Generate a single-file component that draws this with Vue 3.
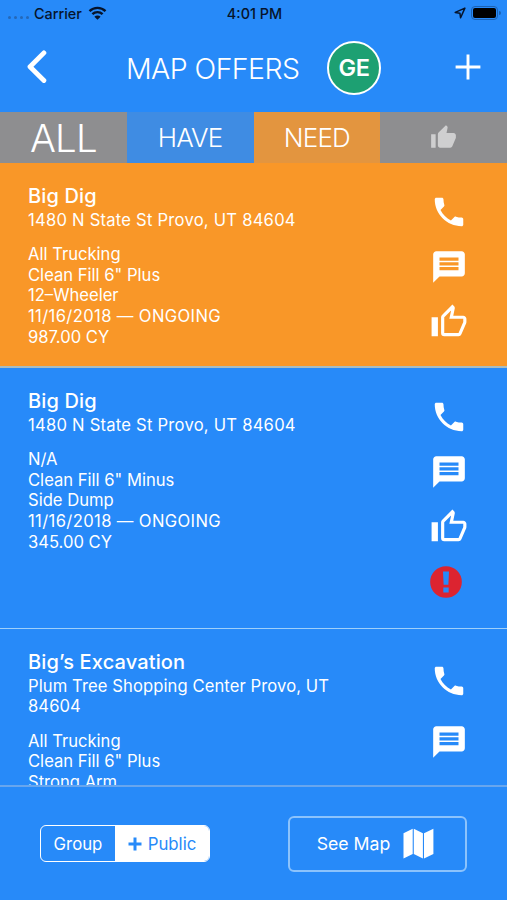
<template>
  <div class="screen">
    <div class="status">
      <div class="status-left">
        <span class="dots"><i v-for="n in 4" :key="n"></i></span>
        <span class="carrier">Carrier</span>
        <svg class="wifi" viewBox="0 0 18 14">
          <path d="M1 5.2a11.4 11.4 0 0 1 16 0M3.9 8.2a7.3 7.3 0 0 1 10.2 0" />
          <path class="fill" d="M9 13.8l-3.1-3.1a4.4 4.4 0 0 1 6.2 0z" />
        </svg>
      </div>
      <span class="time">4:01 PM</span>
      <div class="status-right">
        <svg class="locate" viewBox="0 0 12 12">
          <path d="M10.9 1.1L1.2 5.4l4.7.8.7 4.6z" />
        </svg>
        <div class="battery"><div class="level"></div></div>
        <div class="battery-tip"></div>
      </div>
    </div>

    <header class="header">
      <svg class="back" viewBox="0 0 20 34">
        <path d="M16.9 2.9L3 16.7L16.9 30.5" />
      </svg>
      <h1>MAP OFFERS</h1>
      <div class="avatar">GE</div>
      <svg class="plus" viewBox="0 0 26 26">
        <path d="M13 .6v24.8M.6 13h24.8" />
      </svg>
    </header>

    <nav class="tabs">
      <div
        v-for="tab in tabs"
        :key="tab"
        :class="['tab', `tab_${tab.toLowerCase()}`, { active: tab === activeTab }]"
        @click="activeTab = tab"
      >
        <svg v-if="tab === 'LIKED'" viewBox="0 0 24 24"><path :d="icons.liked" /></svg>
        <span v-else>{{ tab }}</span>
      </div>
    </nav>

    <main class="list">
      <section v-for="(offer, index) in offers" :key="index" :class="['offer', `offer_${index}`]">
        <div class="info">
          <h2>{{ offer.name }}</h2>
          <p class="address">{{ offer.address }}</p>
          <p v-for="line in offer.lines" :key="line" :class="{ date: line.includes('/20') }">
            {{ line }}
          </p>
        </div>
        <div class="actions">
          <svg v-for="icon in offer.icons" :key="icon" :class="icon" viewBox="0 0 24 24">
            <path :d="icons[icon]" fill-rule="evenodd" />
          </svg>
        </div>
      </section>
    </main>

    <footer class="footer">
      <div class="switch">
        <div class="option" @click="isPublic = false">Group</div>
        <div class="option selected" @click="isPublic = true">
          <svg v-if="isPublic" viewBox="0 0 14 14"><path d="M7 .5v13M.5 7h13" /></svg>
          <span>Public</span>
        </div>
      </div>
      <button class="map">
        <span>See Map</span>
        <svg viewBox="0 0 31 31">
          <path d="M.5 5.2L9.7 .8V26L.5 30.4zM10.8 .8L19.9 5.2V30.4L10.8 26zM21 5.2L30.4 .8V26L21 30.4z" />
        </svg>
      </button>
    </footer>
  </div>
</template>

<script setup>
import { ref } from 'vue'

const tabs = ['ALL', 'HAVE', 'NEED', 'LIKED']
const activeTab = ref('ALL')
const isPublic = ref(true)

const icons = {
  phone:
    'M6.62 10.79c1.44 2.83 3.76 5.14 6.59 6.59l2.2-2.2c.27-.27.67-.36 1.02-.24 1.12.37 2.33.57 3.57.57.55 0 1 .45 1 1V20c0 .55-.45 1-1 1-9.39 0-17-7.61-17-17 0-.55.45-1 1-1h3.5c.55 0 1 .45 1 1 0 1.25.2 2.45.57 3.57.11.35.03.74-.25 1.02l-2.2 2.2z',
  message:
    'M20 2H4c-1.1 0-1.99.9-1.99 2L2 22l4-4h14c1.1 0 2-.9 2-2V4c0-1.1-.9-2-2-2zm-2 12H6v-2h12v2zm0-3H6V9h12v2zm0-3H6V6h12v2z',
  like: 'M5 9v12H1V9h4m4 12a2 2 0 0 1-2-2V9c0-.55.22-1.05.59-1.41L14.17 1l1.06 1.06c.27.27.44.64.44 1.05l-.03.32L14.69 8H21c1.11 0 2 .9 2 2v2c0 .26-.05.5-.14.73l-3.02 7.05C19.54 20.5 18.83 21 18 21H9m0-2h9.03L21 12v-2h-8.79l1.13-5.32L9 9.03V19z',
  liked:
    'M1 21h4V9H1v12zm22-11c0-1.1-.9-2-2-2h-6.31l.95-4.57.03-.32c0-.41-.17-.79-.44-1.06L14.17 1 7.59 7.59C7.22 7.95 7 8.45 7 9v10c0 1.1.9 2 2 2h9c.83 0 1.54-.5 1.84-1.22l3.02-7.05c.09-.23.14-.47.14-.73v-2z',
  alert:
    'M12 2a10 10 0 1 0 0 20 10 10 0 0 0 0-20zM10.1 5.4h3.8l-.4 8.4h-3zM10.3 15.4h3.4v3.2h-3.4z'
}

const offers = ref([
  {
    name: 'Big Dig',
    address: '1480 N State St Provo, UT 84604',
    lines: ['All Trucking', 'Clean Fill 6" Plus', '12–Wheeler', '11/16/2018 — ONGOING', '987.00 CY'],
    icons: ['phone', 'message', 'like']
  },
  {
    name: 'Big Dig',
    address: '1480 N State St Provo, UT 84604',
    lines: ['N/A', 'Clean Fill 6" Minus', 'Side Dump', '11/16/2018 — ONGOING', '345.00 CY'],
    icons: ['phone', 'message', 'like', 'alert']
  },
  {
    name: 'Big’s Excavation',
    address: 'Plum Tree Shopping Center Provo, UT 84604',
    lines: ['All Trucking', 'Clean Fill 6" Plus', 'Strong Arm'],
    icons: ['phone', 'message', 'like']
  }
])
</script>

<style>
body {
  margin: 0;
  background: #278af9;
}
</style>

<style scoped>
.screen {
  height: 900px;
  display: flex;
  flex-direction: column;
  overflow: hidden;
  background: #278af9;
  color: #fff;
  font-family: Inter, 'Liberation Sans', sans-serif;
}

svg {
  display: block;
  flex: none;
}

/* status bar */
.status {
  flex: none;
  height: 26px;
  display: grid;
  grid-template-columns: 1fr auto 1fr;
  align-items: center;
  padding: 0 6px 0 8px;
  color: #06142b;
  font-size: 14.4px;
  font-weight: 500;
}
.status-left {
  display: flex;
  align-items: center;
}
.dots {
  display: flex;
  gap: 3px;
  width: 26px;
  padding-top: 8px;
}
.dots i {
  width: 3px;
  height: 3px;
  border-radius: 50%;
  background: #2568b8;
}
.wifi {
  width: 19px;
  height: 14px;
  margin-left: 6px;
  fill: none;
  stroke: #06142b;
  stroke-width: 2.4;
}
.wifi .fill {
  fill: #06142b;
  stroke: none;
}
.status-right {
  display: flex;
  align-items: center;
  justify-content: flex-end;
}
.locate {
  width: 12px;
  height: 12px;
  margin-right: 5px;
  fill: none;
  stroke: #06142b;
  stroke-width: 1.5;
  stroke-linejoin: round;
}
.battery {
  width: 23px;
  height: 10px;
  padding: 1px;
  border: 1px solid #1c62b3;
  border-radius: 4px;
}
.level {
  height: 100%;
  border-radius: 2px;
  background: #000;
}
.battery-tip {
  width: 2px;
  height: 4px;
  margin-left: 1px;
  border-radius: 0 2px 2px 0;
  background: #1c62b3;
}

/* title bar */
.header {
  flex: none;
  height: 86px;
  display: flex;
  align-items: center;
  box-sizing: border-box;
  padding: 0 26px;
}
.back {
  width: 20px;
  height: 34px;
  margin: -5px 0 0 1px;
  fill: none;
  stroke: #fff;
  stroke-width: 4.8;
  stroke-linecap: round;
  stroke-linejoin: round;
}
h1 {
  width: 174px;
  margin: -1px 0 0 79px;
  font-size: 28.5px;
  font-weight: 300;
  letter-spacing: -0.55px;
  white-space: nowrap;
}
.avatar {
  width: 50px;
  height: 50px;
  margin: -2px 0 0 27px;
  border: 2px solid #fff;
  border-radius: 50%;
  background: #1da072;
  font-size: 23.5px;
  font-weight: 600;
  letter-spacing: -0.5px;
  line-height: 50px;
  text-align: center;
}
.plus {
  width: 26px;
  height: 26px;
  margin: -5px 0 0 auto;
  fill: none;
  stroke: #fff;
  stroke-width: 2.9;
}

/* filter tabs */
.tabs {
  flex: none;
  height: 51px;
  display: grid;
  grid-template-columns: repeat(4, 1fr);
}
.tab {
  display: flex;
  align-items: center;
  justify-content: center;
  background: #8e8e90;
  font-size: 26px;
  font-weight: 300;
  letter-spacing: -0.8px;
}
.tab.active {
  font-size: 38.5px;
}
.tab_have {
  background: #3f8ce3;
}
.tab_need {
  background: #e3953f;
}
.tab svg {
  width: 27px;
  height: 27px;
  fill: #cfcfd0;
}

/* offers */
.list {
  flex: 1;
  min-height: 0;
  overflow: hidden;
}
.offer {
  display: flex;
  justify-content: space-between;
  height: 261px;
  box-sizing: border-box;
  padding: 21px 39px 0 28px;
  border-bottom: 1px solid #9fd0fa;
}
.offer_0 {
  height: 205px;
  border-bottom: 2px solid #a9bcc0;
  background: #f99728;
}
.info {
  width: 315px;
}
h2 {
  margin: 0;
  font-size: 20px;
  font-weight: 500;
  letter-spacing: 0.14px;
  line-height: 25px;
}
p {
  margin: 0;
  font-size: 16.6px;
  line-height: 20.7px;
}
.address {
  margin-bottom: 13.7px;
  padding-top: 0.7px;
  letter-spacing: 0.23px;
}
.offer_2 .address {
  letter-spacing: 0.09px;
}
.date {
  letter-spacing: 0.37px;
}
.actions {
  display: flex;
  flex-direction: column;
  gap: 17px;
  padding-top: 9px;
}
.offer_2 .actions {
  gap: 23px;
  padding-top: 12px;
}
.actions svg {
  width: 38px;
  height: 38px;
  fill: #fff;
}
.actions .alert {
  margin-left: -3px;
  fill: #dc2430;
}

/* bottom bar */
.footer {
  flex: none;
  height: 115px;
  display: flex;
  align-items: center;
  justify-content: space-between;
  box-sizing: border-box;
  padding: 0 40px;
  border-top: 2px solid #68a6ee;
}
.switch {
  display: flex;
  width: 170px;
  height: 37px;
  box-sizing: border-box;
  overflow: hidden;
  border: 1.5px solid #fff;
  border-radius: 6px;
  font-size: 16.8px;
}
.option {
  width: 74px;
  display: flex;
  align-items: center;
  justify-content: center;
}
.selected {
  flex: 1;
  gap: 6px;
  background: #fff;
  color: #278af9;
}
.selected svg {
  width: 14px;
  height: 14px;
  stroke: #278af9;
  stroke-width: 3;
}
.map {
  width: 179px;
  height: 56px;
  display: flex;
  align-items: center;
  justify-content: center;
  gap: 13px;
  box-sizing: border-box;
  padding: 0 4px 0 0;
  border: 2px solid #8cc3fc;
  border-radius: 6px;
  background: none;
  color: #fff;
  font: 17.7px Inter, 'Liberation Sans', sans-serif;
}
.map svg {
  width: 31px;
  height: 31px;
  fill: #fff;
}
</style>
